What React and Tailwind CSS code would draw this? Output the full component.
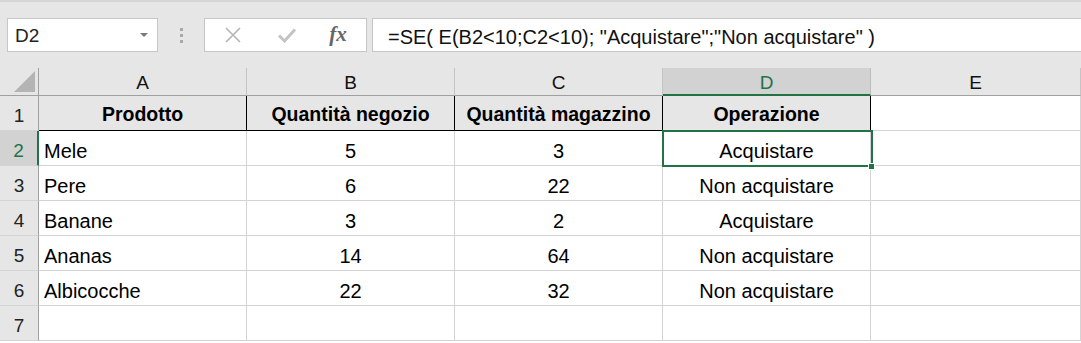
const font = { fontFamily: '"Liberation Sans", Arial, sans-serif' };

const rows = [
  ["Mele", "5", "3", "Acquistare"],
  ["Pere", "6", "22", "Non acquistare"],
  ["Banane", "3", "2", "Acquistare"],
  ["Ananas", "14", "64", "Non acquistare"],
  ["Albicocche", "22", "32", "Non acquistare"],
  ["", "", "", ""],
];

const heads = ["Prodotto", "Quantità negozio", "Quantità magazzino", "Operazione"];

function FormulaBar() {
  return (
    <div className="h-[68px] bg-[#e6e6e6] border-t-2 border-[#d6d6d6] flex items-start pt-4">
      <div className="ml-[7px] w-[151px] h-[34px] bg-white border border-[#c6c6c6] flex items-center justify-between pl-[7px] pr-[9px]">
        <span className="text-[19px] text-[#222] pt-[2px]">D2</span>
        <svg width="8" height="5" viewBox="0 0 8 5">
          <path d="M0 0h8L4 4z" fill="#7a7a7a" />
        </svg>
      </div>
      <div className="w-[46px] h-[34px] flex flex-col items-center justify-center gap-[3px]">
        <span className="w-[3px] h-[3px] bg-[#a8a8a8]" />
        <span className="w-[3px] h-[3px] bg-[#a8a8a8]" />
        <span className="w-[3px] h-[3px] bg-[#a8a8a8]" />
      </div>
      <div className="w-[163px] h-[34px] bg-white border border-[#c6c6c6] flex items-center">
        <div className="w-[56px] flex justify-center">
          <svg width="18" height="18" viewBox="0 0 18 18">
            <path d="M2 2L16 16M16 2L2 16" stroke="#b4b4b4" strokeWidth="1.6" />
          </svg>
        </div>
        <div className="w-[52px] flex justify-center">
          <svg width="20" height="16" viewBox="0 0 20 16">
            <path d="M2 8.5L7.5 14L18 2.5" stroke="#c4c4c4" strokeWidth="3" fill="none" />
          </svg>
        </div>
        <div className="w-[50px] flex justify-center">
          <span
            className="text-[21px] italic font-bold text-[#666]"
            style={{ fontFamily: '"Liberation Serif", serif' }}
          >
            fx
          </span>
        </div>
      </div>
      <div className="ml-[5px] flex-1 h-[34px] bg-white border border-[#c6c6c6] border-r-0 flex items-center pl-[15px]">
        <span className="text-[20px] text-[#111] whitespace-pre pt-[3px]">
          =SE( E(B2&lt;10;C2&lt;10); "Acquistare";"Non acquistare" )
        </span>
      </div>
    </div>
  );
}

export default function App() {
  const cols = ["A", "B", "C", "D", "E"];
  return (
    <div className="w-[1081px] h-[343px] overflow-hidden bg-white" style={font}>
      <FormulaBar />
      <div className="relative grid grid-cols-[39px_208px_208px_208px_208px_210px] grid-rows-[28px_35px_35px_35px_35px_35px_35px_35px]">
        <div className="bg-[#e6e6e6] border-r border-b border-[#a0a0a0] flex items-end justify-end pr-[3px] pb-[3px]">
          <svg width="21" height="21" viewBox="0 0 21 21">
            <path d="M21 0V21H0z" fill="#b4b4b4" />
          </svg>
        </div>
        {cols.map((c) =>
          c === "D" ? (
            <div
              key={c}
              className="bg-[#d2d2d2] border-r border-[#bdbdbd] border-b-2 border-b-[#217346] flex items-center justify-center text-[19px] text-[#217346] pt-[5px]"
            >
              {c}
            </div>
          ) : (
            <div
              key={c}
              className="bg-[#e6e6e6] border-r border-[#c4c4c4] border-b border-b-[#a0a0a0] flex items-center justify-center text-[19px] text-[#111] pt-[4px]"
            >
              {c}
            </div>
          )
        )}

        <div className="bg-[#e6e6e6] border-r border-[#a0a0a0] border-b border-b-[#d4d4d4] flex items-center justify-center text-[19px] text-[#222] pt-[6px]">
          1
        </div>
        {heads.map((h) => (
          <div
            key={h}
            className="bg-[#e7e6e6] border-r border-b border-black flex items-center justify-center text-[19.5px] font-bold text-black pt-[4px]"
          >
            {h}
          </div>
        ))}
        <div className="border-r border-b border-[#d4d4d4]" />

        {rows.map((r, i) => (
          <Row key={i} n={i + 2} cells={r} />
        ))}

        <div className="absolute left-[662px] top-[62px] w-[211px] h-[37px] border-2 border-[#217346] pointer-events-none" />
        <div className="absolute left-[868px] top-[95px] w-[7px] h-[7px] bg-[#217346] border border-white pointer-events-none" />
      </div>
    </div>
  );
}

function Row({ n, cells }) {
  const active = n === 2;
  return (
    <>
      <div
        className={
          active
            ? "bg-[#d2d2d2] border-r-2 border-r-[#217346] border-b border-b-[#d4d4d4] flex items-center justify-center text-[19px] text-[#217346] pt-[6px]"
            : "bg-[#e6e6e6] border-r border-r-[#a0a0a0] border-b border-b-[#d4d4d4] flex items-center justify-center text-[19px] text-[#222] pt-[6px]"
        }
      >
        {n}
      </div>
      <div className="border-r border-b border-[#d4d4d4] flex items-center pl-[5px] text-[20px] text-black pt-[5px]">
        {cells[0]}
      </div>
      {cells.slice(1).map((c, i) => (
        <div
          key={i}
          className="border-r border-b border-[#d4d4d4] flex items-center justify-center text-[20px] text-black pt-[5px]"
        >
          {c}
        </div>
      ))}
      <div className="border-r border-b border-[#d4d4d4]" />
    </>
  );
}
